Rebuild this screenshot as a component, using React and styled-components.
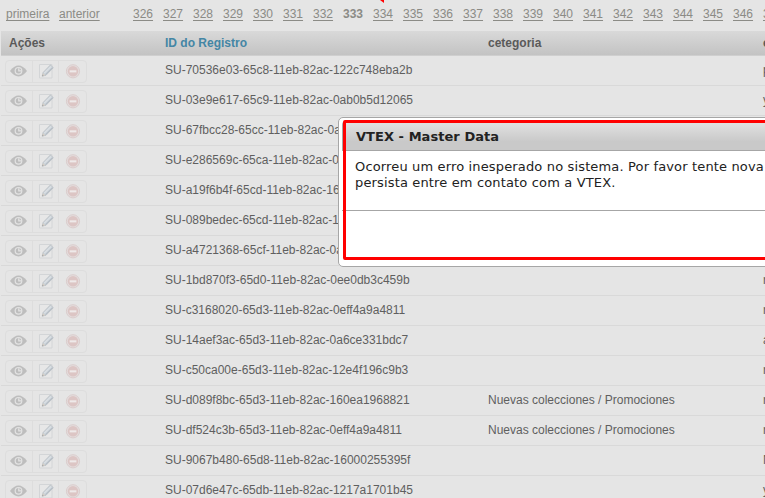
import React from 'react';
import styled, { createGlobalStyle } from 'styled-components';

const GlobalStyle = createGlobalStyle`
  * { box-sizing: border-box; }
  body {
    margin: 0;
    overflow: hidden;
    background: #e5e5e5;
    font: 12px/14px "Liberation Sans", Arial, sans-serif;
    color: #5f5f5f;
  }
`;

const Page = styled.main`
  position: relative;
  width: 765px;
  height: 498px;
  overflow: hidden;
`;

const Pager = styled.nav`
  display: flex;
  height: 31px;
  padding: 7px 0 0 6px;
  color: #8b8b86;
  white-space: nowrap;
`;

const PagerLink = styled.a`
  flex: none;
  height: 14px;
  width: ${(p) => p.$width || 20}px;
  margin-right: ${(p) => p.$gap || 10}px;
  text-decoration: underline;
  text-underline-offset: 2px;
  text-decoration-thickness: 1px;
`;

const CurrentPage = styled.strong`
  flex: none;
  width: 20px;
  margin-right: 10px;
`;

const Row = styled.div`
  display: grid;
  grid-template-columns: 164px 323px 275px 160px;
  align-items: center;
  width: 922px;
  height: 30px;
  margin-left: 1px;
  border-bottom: 1px solid #d9d9d9;
  white-space: nowrap;
`;

const HeaderRow = styled(Row)`
  height: 25px;
  padding-bottom: 1px;
  background: linear-gradient(#d9d9d9, #c3c3c3);
  border-bottom-color: #cfcfcf;
  font-weight: bold;
  color: #5a5a5a;
`;

const HeaderCell = styled.div`
  padding-left: ${(p) => (p.$first ? 8 : 0)}px;
  color: ${(p) => (p.$sorted ? '#4486a5' : 'inherit')};
`;

const Cell = styled.div`
  height: 16px;
`;

const Actions = styled.div`
  display: flex;
  width: 82px;
  height: 23px;
  margin: 1px 0 0 4px;
  border: 1px solid #dddddd;
  border-radius: 4px;
`;

const ActionButton = styled.button`
  display: flex;
  align-items: center;
  justify-content: center;
  width: 27px;
  padding: 0;
  border: 0;
  border-right: ${(p) => (p.$last ? '0' : '1px solid #dddddd')};
  background: none;
`;

const Dialog = styled.section`
  position: absolute;
  left: 338px;
  top: 117px;
  width: 560px;
  height: 150px;
  padding: 3px;
  border: 1px solid #a6a6a6;
  border-radius: 5px;
  background: #fff;
  font: 13px/16px "DejaVu Sans", Verdana, sans-serif;
  color: #222;
`;

const DialogTitle = styled.h2`
  height: 30px;
  margin: 0;
  padding: 7px 0 0 13px;
  border: 1px solid #a6a6a6;
  border-top-color: #ccc;
  border-radius: 4px 4px 0 0;
  background: linear-gradient(#e2e2e2, #c9c9c9 70%);
  font-size: 13px;
  line-height: 16px;
  letter-spacing: 0.05px;
`;

const DialogText = styled.p`
  height: 59px;
  margin: 0;
  padding: 8px 0 0 13px;
  white-space: nowrap;
  letter-spacing: 0.15px;
`;

const DialogFooter = styled.footer`
  height: 54px;
  border-top: 1px solid #a6a6a6;
`;

const Highlight = styled.div`
  position: absolute;
  left: 343px;
  top: 120px;
  width: 560px;
  height: 140px;
  border: 3px solid #ff0000;
  border-radius: 2px;
`;

const ArrowTip = styled.svg`
  position: absolute;
  left: 379px;
  top: 0;
`;

const EyeIcon = () => (
  <svg width="18" height="14" viewBox="0 0 18 14">
    <path d="M0 7Q4 1.5 8.5 1.5T17 7Q13 12.4 8.5 12.4T0 7Z" fill="#bebebe" />
    <circle cx="8.5" cy="6.8" r="3.9" fill="#e3e3e3" />
    <circle cx="8.5" cy="6.8" r="2.7" fill="#bdbdbd" />
    <path d="M8.8 4.2v2.6h2.6" fill="none" stroke="#e3e3e3" strokeWidth="1.3" />
  </svg>
);

const EditIcon = () => (
  <svg width="16" height="16" viewBox="0 0 16 16">
    <path d="M1.5 1.5h12.5v13.5h-12.5z" fill="#e7e7e7" stroke="#d3d5d7" />
    <path d="M4.2 13.2l1-3.8 7.2-7.4 2.9 2.7-7.3 7.5z" fill="#cdd3d8" stroke="#b9bfc5" strokeWidth=".9" />
    <path d="M6.3 10.2l6.8-6.8" stroke="#dce2e7" strokeWidth="1.1" />
    <path d="M7.4 11.6l7-7" stroke="#b4bdc6" strokeWidth=".9" />
    <path d="M4.2 13.2l.8-2.9 2.1 2z" fill="#d8d0c6" />
    <path d="M4.2 13.2l.4-1.5 1 1z" fill="#999" />
  </svg>
);

const RemoveIcon = () => (
  <svg width="16" height="16" viewBox="0 0 16 16">
    <circle cx="8" cy="8.3" r="6.6" fill="#e3dddd" stroke="#d9c9c9" strokeWidth=".9" />
    <circle cx="8" cy="8.3" r="5.2" fill="#dcc5c4" />
    <path d="M4.6 7.3h6.8v2.1H4.6z" fill="#eee9e9" />
  </svg>
);

const records = [
  ['SU-70536e03-65c8-11eb-82ac-122c748eba2b', '', 'p'],
  ['SU-03e9e617-65c9-11eb-82ac-0ab0b5d12065', '', 'y'],
  ['SU-67fbcc28-65cc-11eb-82ac-0a', '', ''],
  ['SU-e286569c-65ca-11eb-82ac-0', '', ''],
  ['SU-a19f6b4f-65cd-11eb-82ac-16', '', ''],
  ['SU-089bedec-65cd-11eb-82ac-1', '', ''],
  ['SU-a4721368-65cf-11eb-82ac-0a', '', ''],
  ['SU-1bd870f3-65d0-11eb-82ac-0ee0db3c459b', '', 'r'],
  ['SU-c3168020-65d3-11eb-82ac-0eff4a9a4811', '', 'r'],
  ['SU-14aef3ac-65d3-11eb-82ac-0a6ce331bdc7', '', 'a'],
  ['SU-c50ca00e-65d3-11eb-82ac-12e4f196c9b3', '', 'r'],
  ['SU-d089f8bc-65d3-11eb-82ac-160ea1968821', 'Nuevas colecciones / Promociones', 'r'],
  ['SU-df524c3b-65d3-11eb-82ac-0eff4a9a4811', 'Nuevas colecciones / Promociones', 'r'],
  ['SU-9067b480-65d8-11eb-82ac-16000255395f', '', 'N'],
  ['SU-07d6e47c-65db-11eb-82ac-1217a1701b45', '', 'y'],
];

const pages = Array.from({ length: 22 }, (_, i) => 326 + i);

export default function App() {
  return (
    <Page>
      <GlobalStyle />
      <Pager>
        <PagerLink $width={43}>primeira</PagerLink>
        <PagerLink $width={41} $gap={33}>anterior</PagerLink>
        {pages.map((n) =>
          n === 333 ? <CurrentPage key={n}>{n}</CurrentPage> : <PagerLink key={n}>{n}</PagerLink>
        )}
      </Pager>
      <HeaderRow>
        <HeaderCell $first>Ações</HeaderCell>
        <HeaderCell $sorted>ID do Registro</HeaderCell>
        <HeaderCell>cetegoria</HeaderCell>
        <HeaderCell>e</HeaderCell>
      </HeaderRow>
      {records.map(([id, category, email]) => (
        <Row key={id}>
          <Actions>
            <ActionButton aria-label="Ver"><EyeIcon /></ActionButton>
            <ActionButton aria-label="Editar"><EditIcon /></ActionButton>
            <ActionButton aria-label="Remover" $last><RemoveIcon /></ActionButton>
          </Actions>
          <Cell>{id}</Cell>
          <Cell>{category}</Cell>
          <Cell>{email}</Cell>
        </Row>
      ))}
      <Dialog>
        <DialogTitle>VTEX - Master Data</DialogTitle>
        <DialogText>
          Ocorreu um erro inesperado no sistema. Por favor tente nova
          <br />
          persista entre em contato com a VTEX.
        </DialogText>
        <DialogFooter />
      </Dialog>
      <Highlight />
      <ArrowTip width="6" height="4" viewBox="0 0 6 4">
        <path d="M1 0h4v3z" fill="#f00" />
      </ArrowTip>
    </Page>
  );
}
